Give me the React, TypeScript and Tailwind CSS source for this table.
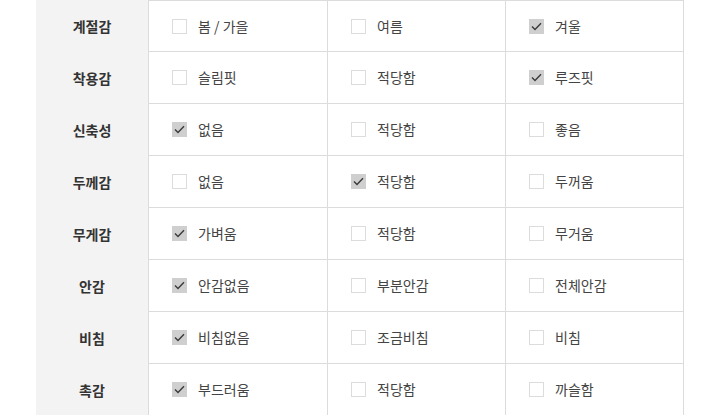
const ROWS: ReadonlyArray<{ label: string; options: string[]; checked: number }> = [
  { label: "계절감", options: ["봄 / 가을", "여름", "겨울"], checked: 2 },
  { label: "착용감", options: ["슬림핏", "적당함", "루즈핏"], checked: 2 },
  { label: "신축성", options: ["없음", "적당함", "좋음"], checked: 0 },
  { label: "두께감", options: ["없음", "적당함", "두꺼움"], checked: 1 },
  { label: "무게감", options: ["가벼움", "적당함", "무거움"], checked: 0 },
  { label: "안감", options: ["안감없음", "부분안감", "전체안감"], checked: 0 },
  { label: "비침", options: ["비침없음", "조금비침", "비침"], checked: 0 },
  { label: "촉감", options: ["부드러움", "적당함", "까슬함"], checked: 0 },
];

function Box({ on }: { on: boolean }) {
  return on ? (
    <span className="flex h-[15px] w-[15px] shrink-0 items-center justify-center bg-[#cfcfcf]" aria-hidden>
      <svg width="11" height="9" viewBox="0 0 11 9" fill="none">
        <path d="M1 4.5 L4 7.5 L10 1.2" stroke="#3a3a3a" strokeWidth="1.4" />
      </svg>
    </span>
  ) : (
    <span className="h-[15px] w-[15px] shrink-0 border border-[#dcdcdc] bg-white" aria-hidden />
  );
}

export default function App() {
  return (
    <div className="h-[415px] w-[720px] overflow-hidden bg-white pl-9 font-['Noto_Sans_CJK_KR','Noto_Sans',sans-serif]">
      <div className="grid w-[648px] grid-cols-[112px_179px_178px_179px] border-r border-[#dcdcdc] bg-white">
        {ROWS.map((row, i) => (
          <div key={row.label} className="contents">
            <div className="flex h-[52px] items-center justify-center bg-[#f3f3f3] text-[14px] font-bold text-[#333]">
              {row.label}
            </div>
            {row.options.map((opt, j) => (
              <div
                key={opt + j}
                className={`flex h-[52px] items-center gap-[11px] border-l border-b border-[#dcdcdc] pl-[23px] text-[14px] text-[#444] ${
                  i === 0 ? "border-t" : ""
                }`}
              >
                <Box on={row.checked === j} />
                <span>{opt}</span>
              </div>
            ))}
          </div>
        ))}
      </div>
    </div>
  );
}
